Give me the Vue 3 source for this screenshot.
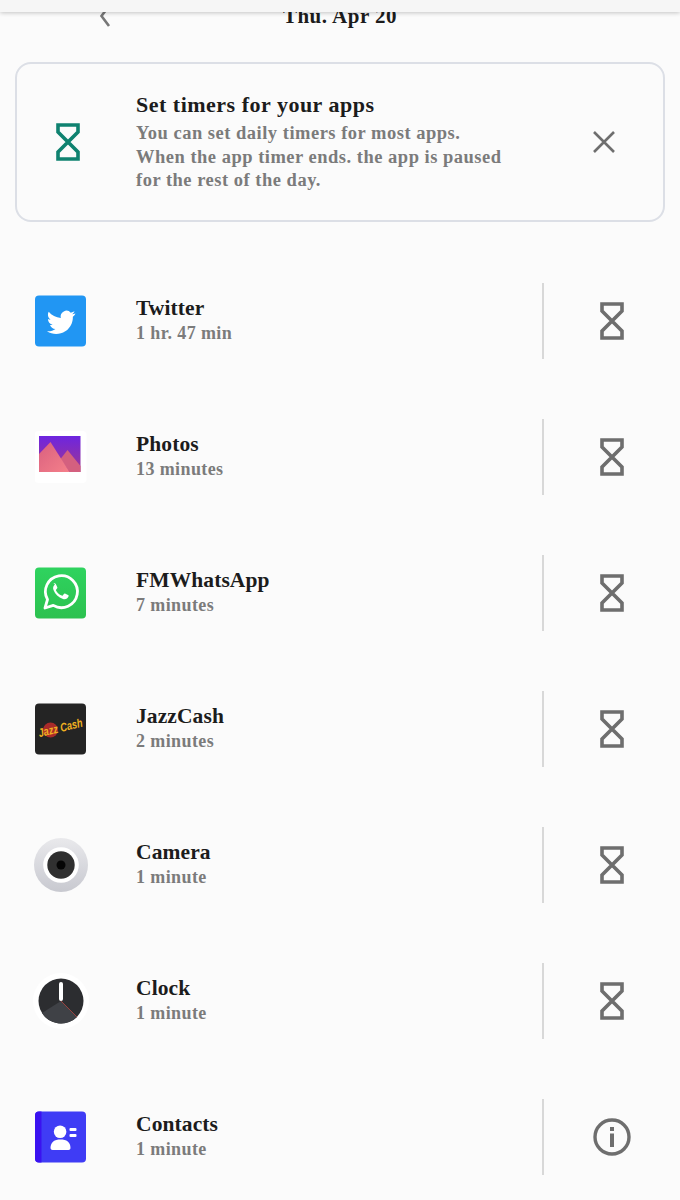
<template>
  <div class="page">
    <div class="topbar"></div>
    <div class="datebar">
      <svg class="back" width="14" height="22" viewBox="0 0 14 22"><path d="M11 1 L3.500 11 L11 21" fill="none" stroke="#777" stroke-width="2.600" /></svg>
      <span class="date">Thu. Apr 20</span>
    </div>

    <div class="card">
      <div class="card-icon">
        <svg width="24" height="38" viewBox="0 0 24 38"><path :d="glass" fill="none" stroke="#0f8270" stroke-width="3.600" /></svg>
      </div>
      <div class="card-text">
        <div class="card-title">Set timers for your apps</div>
        <div class="card-desc">You can set daily timers for most apps.<br />When the app timer ends. the app is paused<br />for the rest of the day.</div>
      </div>
      <svg class="close" width="26" height="26" viewBox="0 0 26 26"><path d="M3 3 L23 23 M23 3 L3 23" stroke="#6e6e6e" stroke-width="2.600" fill="none" /></svg>
    </div>

    <div class="list">
      <div class="row" v-for="app in apps" :key="app.name">
        <div class="app-icon">
          <svg v-if="app.name === 'Twitter'" width="52" height="52" viewBox="0.500 0 52 52">
            <rect x="0.500" y="0.500" width="51" height="51" rx="4" fill="#2196f3" />
            <path transform="translate(3 4.500) scale(0.900)" d="M42 15.500c-1.200.5-2.400.9-3.700 1 1.300-.8 2.300-2 2.800-3.500-1.300.7-2.600 1.300-4.100 1.600a6.500 6.500 0 0 0-11.100 5.900C20.500 20.200 15.700 17.600 12.500 13.700c-1.700 3-.9 6.800 2 8.700-1 0-2-.3-2.900-.8 0 3.200 2.200 5.900 5.200 6.500-1 .3-2 .3-2.900.1.800 2.600 3.200 4.400 6 4.500-2.700 2.100-6.100 3-9.400 2.600 9.800 6.300 22.900 2.400 27.400-8.400 1-2.500 1.500-5 1.400-7.600 1.100-.9 2-1.900 2.700-3.200z" fill="#fff" />
          </svg>
          <svg v-else-if="app.name === 'Photos'" width="52" height="52" viewBox="0.500 0 52 52">
            <defs>
              <linearGradient id="sky" x1="0" y1="0" x2="0" y2="1"><stop offset="0" stop-color="#6d25e0" /><stop offset="1" stop-color="#a0388f" /></linearGradient>
              <linearGradient id="hill" x1="0" y1="0" x2="1" y2="1"><stop offset="0" stop-color="#d9607f" /><stop offset="1" stop-color="#f5808a" /></linearGradient>
            </defs>
            <rect x="0" y="0" width="52" height="52" rx="4" fill="#fff" />
            <rect x="4.500" y="5" width="41.500" height="36" fill="url(#sky)" />
            <path d="M33 19 L46 35 V41 H35 L26 28z" fill="#d4607f" />
            <path d="M4.500 23 L16 11 L35 41 H4.500z" fill="url(#hill)" />
          </svg>
          <svg v-else-if="app.name === 'FMWhatsApp'" width="52" height="52" viewBox="0.500 0 52 52">
            <defs>
              <linearGradient id="wa" x1="0" y1="0" x2="0" y2="1"><stop offset="0" stop-color="#2fd35f" /><stop offset="1" stop-color="#2cc14f" /></linearGradient>
            </defs>
            <rect x="0.500" y="0.500" width="51" height="51" rx="4" fill="url(#wa)" />
            <path d="M10.500 41 L13 32.500 A16 16 0 1 1 18.800 38.400 Z" fill="none" stroke="#fff" stroke-width="2.800" stroke-linejoin="round" />
            <path d="M20.500 17.500c-1.500 1-2.500 3-1.500 5.500 1.600 4 5 7.500 9.500 9 2.500.8 4.800-.5 5.500-2.400.2-.6.200-1.100 0-1.300l-3.500-1.800c-.5-.2-.8 0-1.100.4l-1.200 1.500c-.3.300-.6.300-1 .2-2.500-1-4.600-3-5.700-5.200-.2-.4-.1-.7.200-1l1-1.200c.2-.3.200-.6.100-.9l-1.500-3.300c-.4-.7-1.500-.8-2.300-.5z" fill="#fff" />
          </svg>
          <svg v-else-if="app.name === 'JazzCash'" width="52" height="52" viewBox="0.500 0 52 52">
            <rect x="0.500" y="0.500" width="51" height="51" rx="4" fill="#242424" />
            <circle cx="16" cy="27" r="7.500" fill="#a82a2a" />
            <g transform="rotate(-14 26 25) translate(26 29) scale(0.780 1)">
              <text text-anchor="middle" class="jazz">Jazz Cash</text>
            </g>
          </svg>
          <svg v-else-if="app.name === 'Camera'" width="56" height="56" viewBox="0 0 56 56">
            <defs>
              <linearGradient id="cam" x1="0" y1="0" x2="0" y2="1"><stop offset="0" stop-color="#e9e9ec" /><stop offset="1" stop-color="#c8c9d0" /></linearGradient>
            </defs>
            <circle cx="28" cy="28" r="27" fill="url(#cam)" />
            <circle cx="28" cy="28" r="17.800" fill="#fff" />
            <circle cx="28" cy="28" r="13.700" fill="#303030" />
            <circle cx="28" cy="28" r="4.500" fill="#050505" />
          </svg>
          <svg v-else-if="app.name === 'Clock'" width="56" height="56" viewBox="0 0 56 56">
            <circle cx="28" cy="28" r="28" fill="#fff" />
            <circle cx="28" cy="28" r="22.500" fill="#2c2d30" />
            <path d="M28 28 L9 40 A22.500 22.500 0 0 0 44 44 Z" fill="#3f4146" />
            <line x1="28" y1="28" x2="44" y2="44" stroke="#b5443f" stroke-width="0.800" />
            <rect x="26" y="9" width="4" height="19" rx="2" fill="#fff" />
          </svg>
          <svg v-else width="52" height="52" viewBox="0.500 0 52 52">
            <rect x="0.500" y="0.500" width="51" height="51" rx="4" fill="#3f3cf5" />
            <path d="M0.500 4.500a4 4 0 0 1 4-4H7V51.500H4.500a4 4 0 0 1-4-4z" fill="#3a12f0" />
            <circle cx="25.600" cy="20.700" r="6.300" fill="#fff" />
            <path d="M16 37c0-6 4-8.500 10-8.500s10 2.500 10 8.500c0 1-1 2-2 2H18c-1 0-2-1-2-2z" fill="#fff" />
            <rect x="35" y="17" width="7" height="3" rx="1" fill="#fff" />
            <rect x="35" y="23" width="7" height="3" rx="1" fill="#fff" />
          </svg>
        </div>
        <div class="app-text">
          <div class="app-name">{{ app.name }}</div>
          <div class="app-time">{{ app.time }}</div>
        </div>
        <div class="action">
          <svg v-if="app.name !== 'Contacts'" width="24" height="38" viewBox="0 0 24 38"><path :d="glass" fill="none" stroke="#6e6e6e" stroke-width="3.600" /></svg>
          <svg v-else width="38" height="38" viewBox="0 0 38 38">
            <circle cx="19" cy="19" r="17" fill="none" stroke="#6e6e6e" stroke-width="3.400" />
            <rect x="17" y="9" width="4" height="4" fill="#6e6e6e" />
            <rect x="17" y="15.500" width="4" height="13.500" fill="#6e6e6e" />
          </svg>
        </div>
      </div>
    </div>
  </div>
</template>

<script setup>
const glass = "M2 2 H22 V9 L2 29 V36 H22 V29 L2 9 Z";

const apps = [
  { name: "Twitter", time: "1 hr. 47 min" },
  { name: "Photos", time: "13 minutes" },
  { name: "FMWhatsApp", time: "7 minutes" },
  { name: "JazzCash", time: "2 minutes" },
  { name: "Camera", time: "1 minute" },
  { name: "Clock", time: "1 minute" },
  { name: "Contacts", time: "1 minute" },
];
</script>

<style>
html,
body {
  margin: 0;
  background: #fbfbfb;
}
</style>

<style scoped>
.page {
  position: relative;
  width: 680px;
  height: 1200px;
  overflow: hidden;
  background: #fbfbfb;
  font-family: "Liberation Serif", serif;
}
.topbar {
  position: absolute;
  z-index: 2;
  top: 0;
  left: 0;
  right: 0;
  height: 12px;
  background: #f6f6f6;
  box-shadow: 0 1px 4px rgba(0, 0, 0, 0.22);
}
.datebar {
  height: 62px;
  box-sizing: border-box;
  padding-top: 4px;
  display: flex;
  justify-content: center;
  position: relative;
}
.back {
  position: absolute;
  left: 98px;
  top: 5px;
}
.date {
  font-size: 21px;
  line-height: 24px;
  font-weight: 700;
  color: #1c1c1c;
  letter-spacing: 0.5px;
}
.card {
  margin: 0 15px;
  height: 160px;
  box-sizing: border-box;
  border: 2px solid #dcdfe6;
  border-radius: 16px;
  display: flex;
  align-items: center;
}
.card-icon {
  width: 119px;
  padding-left: 39px;
  box-sizing: border-box;
  display: flex;
}
.card-text {
  flex: 1;
}
.card-title {
  font-size: 22px;
  line-height: 27px;
  font-weight: 700;
  color: #1c1c1c;
  letter-spacing: 0.5px;
}
.card-desc {
  margin-top: 4px;
  font-size: 18.500px;
  line-height: 23.500px;
  font-weight: 700;
  color: #7b7b7b;
  letter-spacing: 0.5px;
}
.close {
  margin-right: 46px;
}
.list {
  margin-top: 31px;
}
.row {
  height: 136px;
  display: flex;
  align-items: center;
}
.app-icon {
  width: 56px;
  margin-left: 33px;
  margin-right: 47px;
  height: 56px;
  display: flex;
  align-items: center;
  justify-content: center;
}
.app-icon svg {
  display: block;
}
.app-text {
  flex: 1;
  margin-top: -2px;
}
.app-name {
  font-size: 21.500px;
  line-height: 25px;
  font-weight: 700;
  color: #1c1c1c;
  letter-spacing: 0.1px;
}
.app-time {
  margin-top: 1px;
  font-size: 18px;
  line-height: 23px;
  font-weight: 700;
  color: #7b7b7b;
  letter-spacing: 0.4px;
}
.action {
  width: 138px;
  height: 76px;
  border-left: 2px solid #d8d8d8;
  box-sizing: border-box;
  display: flex;
  align-items: center;
  justify-content: center;
}
.jazz {
  font-family: "Liberation Sans", sans-serif;
  font-size: 12px;
  font-weight: 700;
  font-style: italic;
  fill: #f0b021;
}
</style>
